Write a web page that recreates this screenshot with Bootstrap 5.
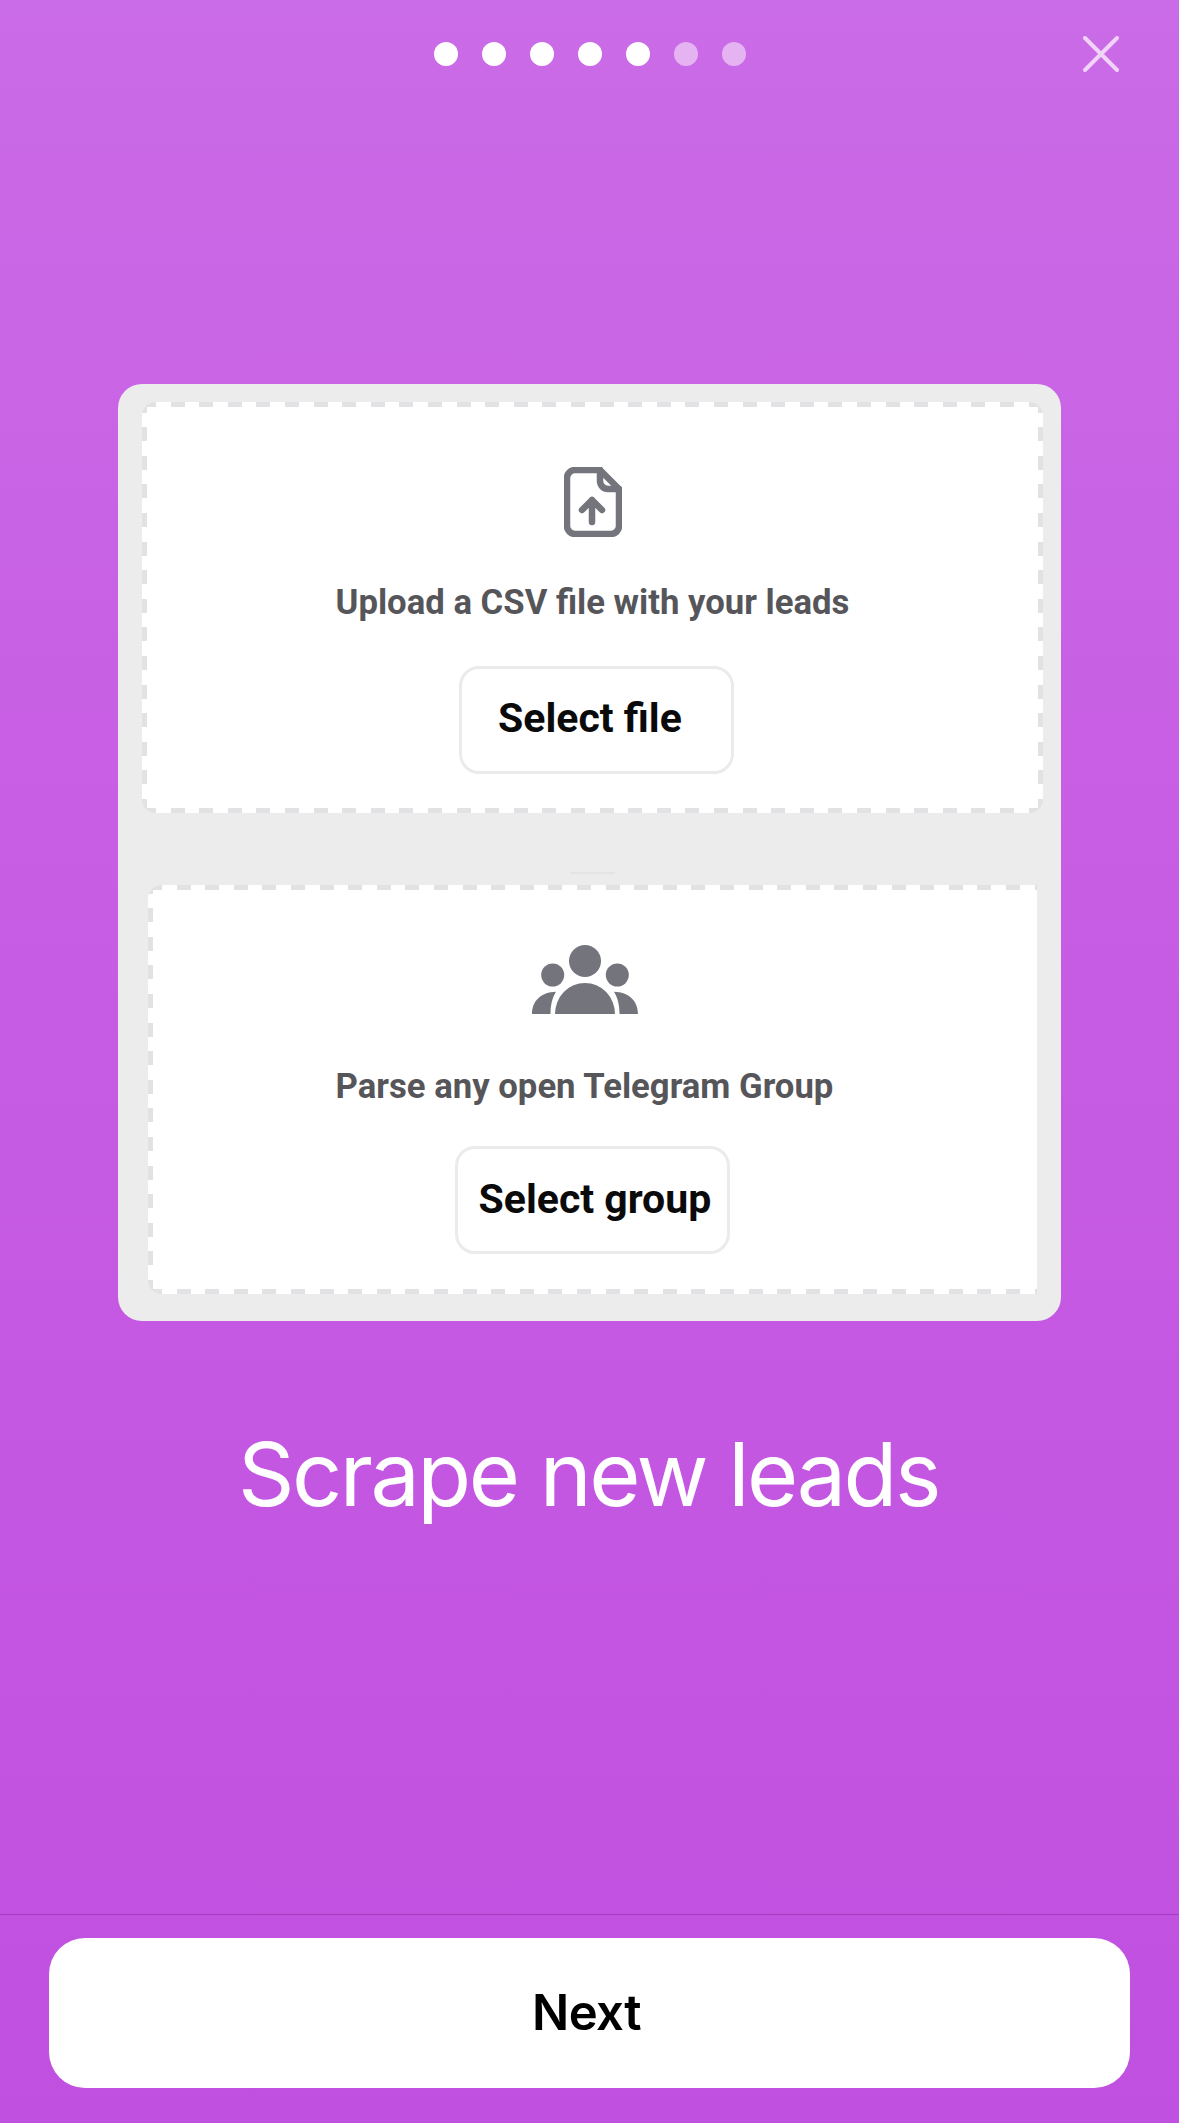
<!DOCTYPE html>
<html lang="en">
<head>
  <meta charset="UTF-8" />
  <meta name="viewport" content="width=device-width, initial-scale=1.0" />
  <title>Scrape new leads</title>
  <link href="https://cdn.jsdelivr.net/npm/bootstrap@5.3.3/dist/css/bootstrap.min.css" rel="stylesheet" />
  <style>
    body {
      background: linear-gradient(180deg, #ca6be7 0%, #c85fe4 35%, #c050e0 100%);
      font-family: Inter, "Liberation Sans", sans-serif;
    }
    .story-top {
      display: grid;
      grid-template-columns: 1fr auto 1fr;
      align-items: center;
      padding-top: 36px;
    }
    .dot {
      width: 24px;
      height: 24px;
      border-radius: 50%;
      background: #fff;
    }
    .dot-dim { background: #e5b3f1; }
    .dots-row { gap: 24px; }
    .close-x {
      justify-self: end;
      padding: 0;
      margin-right: 60px;
      background: none;
      border: 0;
      line-height: 0;
    }
    .shot-box {
      width: 943px;
      margin: 312px 0 0 118px;
      padding: 18px 18px 27px 24px;
      background: #ececed;
      border-radius: 24px;
    }
    .drop-area {
      background-color: #fff;
      background-image:
        repeating-linear-gradient(90deg, #e2e2e4 0 14px, transparent 14px 28.6px),
        repeating-linear-gradient(90deg, #e2e2e4 0 14px, transparent 14px 28.6px),
        repeating-linear-gradient(0deg, #e2e2e4 0 14px, transparent 14px 28.6px),
        repeating-linear-gradient(0deg, #e2e2e4 0 14px, transparent 14px 28.6px);
      background-size: 100% 5px, 100% 5px, 5px 100%, 5px 100%;
      background-position: 0 0, 0 100%, 0 0, 100% 0;
      background-repeat: no-repeat;
      border-radius: 14px;
    }
    .drop-file {
      padding: 65px 0 39px;
    }
    .gap-notch {
      width: 44px;
      height: 2px;
      margin: 59px auto 11px;
      background: #e4e4e6;
    }
    .drop-group {
      margin: 0 6px;
      padding: 60px 16px 40px 0;
      background-size: 100% 5px, 100% 5px, 5px 100%, 0 0;
      border-radius: 14px 0 0 14px;
    }
    .drop-text {
      font-family: Roboto, "Liberation Sans", sans-serif;
      font-weight: 700;
      font-size: 34.7px;
      line-height: 40px;
      color: #56565a;
      margin: 45px 0 0;
    }
    .drop-group .drop-text { margin-top: 52px; }
    .pick-btn {
      width: 275px;
      height: 108px;
      margin-top: 44px;
      margin-left: 8px;
      padding: 0 0 2px 36px;
      text-align: left;
      font-family: Roboto, "Liberation Sans", sans-serif;
      font-weight: 700;
      font-size: 41px;
      color: #0a0a0a;
      background: #fff;
      border: 3px solid #ebebed;
      border-radius: 20px;
    }
    .drop-group .pick-btn {
      margin-top: 40px;
      margin-left: 15px;
      padding: 0 0 0 21px;
    }
    .slide-title {
      font-size: 88px;
      font-weight: 400;
      line-height: 106px;
      color: #fff;
      margin: 100px 0 0 -2px;
      letter-spacing: -2.5px;
    }
    .foot-bar {
      border-top: 1px solid #a23fc0;
      padding: 23px 49px 35px;
    }
    .next-btn {
      height: 150px;
      padding-right: 18px;
      font-size: 49px;
      font-weight: 600;
      letter-spacing: -0.5px;
      color: #000;
      background: #fff;
      border: 0;
      border-radius: 36px;
    }
  </style>
</head>
<body class="vh-100 d-flex flex-column overflow-hidden">

  <!-- Progress dots -->
  <div class="story-top">
    <div></div>
    <div class="d-flex dots-row">
      <span class="dot"></span>
      <span class="dot"></span>
      <span class="dot"></span>
      <span class="dot"></span>
      <span class="dot"></span>
      <span class="dot dot-dim"></span>
      <span class="dot dot-dim"></span>
    </div>
    <button class="close-x" aria-label="Close">
      <svg width="36" height="36" viewBox="0 0 36 36" fill="none" stroke="#f1d2f8" stroke-width="4" stroke-linecap="round">
        <path d="M2 2 L34 34 M34 2 L2 34" />
      </svg>
    </button>
  </div>

  <!-- Screenshot card -->
  <div class="shot-box">
    <div class="drop-area drop-file d-flex flex-column align-items-center">
      <svg width="58" height="70" viewBox="0 0 58 70" fill="none" stroke="#74747c" stroke-width="6.5" stroke-linecap="round" stroke-linejoin="round">
        <path d="M11 3 H36 L55 22 V59 a8 8 0 0 1 -8 8 H11 a8 8 0 0 1 -8 -8 V11 a8 8 0 0 1 8 -8 Z" />
        <path d="M36 3 V14 a8 8 0 0 0 8 8 H55" />
        <path d="M28 55 V33 M18 43 L28 33 L38 43" />
      </svg>
      <p class="drop-text">Upload a CSV file with your leads</p>
      <button class="btn pick-btn">Select file</button>
    </div>

    <div class="gap-notch"></div>

    <div class="drop-area drop-group d-flex flex-column align-items-center">
      <svg width="106" height="69" viewBox="0 0 106 69" fill="#74747c">
        <circle cx="53" cy="16" r="16" />
        <circle cx="20.7" cy="30" r="11.5" />
        <circle cx="85.3" cy="30" r="11.5" />
        <path d="M23 69 a30 31 0 0 1 60 0 Z" />
        <path d="M0 69 C0 56 9 47 24 46.7 C20 53 18.5 61 18.5 69 Z" />
        <path d="M106 69 C106 56 97 47 82 46.7 C86 53 87.5 61 87.5 69 Z" />
      </svg>
      <p class="drop-text">Parse any open Telegram Group</p>
      <button class="btn pick-btn">Select group</button>
    </div>
  </div>

  <h1 class="slide-title text-center">Scrape new leads</h1>

  <div class="foot-bar mt-auto">
    <button class="btn next-btn w-100">Next</button>
  </div>

</body>
</html>
